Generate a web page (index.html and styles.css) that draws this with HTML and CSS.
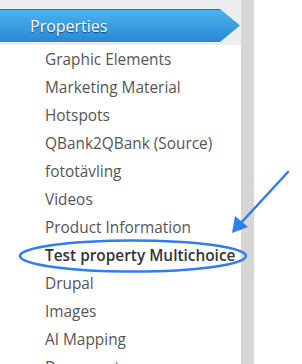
FILE: index.html
```html
<!DOCTYPE html>
<html>
<head>
  <meta charset="utf-8">
  <title>Properties menu</title>
  <link rel="stylesheet" href="styles.css">
</head>
<body>
  <div id="page">
    <!-- Sidebar -->
    <div id="sidebar">
      <div id="topBand">
        <div id="activeTab">Properties</div>
      </div>
      <ul id="menu">
        <li>Graphic Elements</li>
        <li>Marketing Material</li>
        <li>Hotspots</li>
        <li>QBank2QBank (Source)</li>
        <li>fototävling</li>
        <li>Videos</li>
        <li>Product Information</li>
        <li class="highlight">Test property Multichoice</li>
        <li>Drupal</li>
        <li>Images</li>
        <li>AI Mapping</li>
        <li>Documents</li>
      </ul>
    </div>
    <!-- Scrollbar strip -->
    <div id="scrollStrip"></div>
    <div id="rest"></div>

    <!-- Annotation drawn over the page -->
    <svg id="annotation" width="302" height="364" viewBox="0 0 302 364">
      <ellipse cx="133" cy="256" rx="113" ry="15.5" fill="none" stroke="#2f7df0" stroke-width="2.5"/>
      <line x1="288" y1="172" x2="240" y2="224" stroke="#2f7df0" stroke-width="2.5" stroke-linecap="round"/>
      <polygon points="232,233 235,216 248,227" fill="#2f7df0"/>
    </svg>
  </div>
</body>
</html>
```
FILE: styles.css
```css
body {
  margin: 0;
  background: #fff;
  font-family: "Open Sans", Arial, sans-serif;
}
#page {
  position: relative;
  display: flex;
  width: 302px;
  height: 364px;
  overflow: hidden;
}
/* Sidebar */
#sidebar {
  width: 241px;
  flex-shrink: 0;
  background: #fff;
}
#topBand {
  height: 45px;
  padding-top: 9px;
  box-sizing: border-box;
  background: #eeeeee;
}
/* Active blue tab with arrow */
#activeTab {
  height: 32px;
  line-height: 32px;
  padding-left: 30px;
  margin-right: 1px;
  color: #fff;
  font-size: 16px;
  text-shadow: 0 1px 1px rgba(0, 0, 0, 0.55);
  background: linear-gradient(#4ab3ec, #2a88d6);
  border-top: 1px solid #1e72bd;
  clip-path: polygon(0 0, 220px 0, 240px 50%, 220px 100%, 0 100%);
}
/* Menu list */
#menu {
  list-style: none;
  margin: 0;
  padding: 1px 0 0 0;
}
#menu li {
  height: 28px;
  line-height: 28px;
  padding-left: 45px;
  font-size: 15.4px;
  color: #555;
  white-space: nowrap;
}
#menu li.highlight {
  color: #333;
  font-weight: 600;
}
/* Scroll strip */
#scrollStrip {
  width: 13px;
  flex-shrink: 0;
  background: #d6d6d6;
}
#rest {
  flex: 1;
  background: #fff;
}
#annotation {
  position: absolute;
  left: 0;
  top: 0;
}
```
